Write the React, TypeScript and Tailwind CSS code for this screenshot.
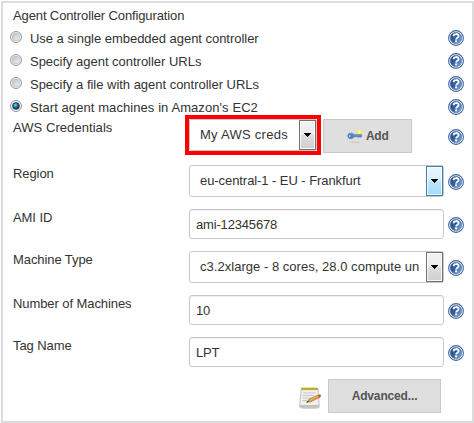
import type { ReactNode } from "react";

function HelpIcon() {
  return (
    <svg width="16" height="16" viewBox="0 0 16 16" className="block shrink-0" aria-label="Help">
      <defs>
        <linearGradient id="helpFill" x1="0" y1="0.2" x2="1" y2="0.8">
          <stop offset="0" stopColor="#1f4a8a" />
          <stop offset="0.45" stopColor="#34619f" />
          <stop offset="1" stopColor="#7fa8d8" />
        </linearGradient>
      </defs>
      <circle cx="8" cy="8" r="7.4" fill="#fff" stroke="#40679f" strokeWidth="1.1" />
      <circle cx="8" cy="8" r="5.8" fill="url(#helpFill)" stroke="#3a639c" strokeWidth="0.4" />
      <path d="M5.6 6.3C5.6 3.3 10.6 3.3 10.6 6.1C10.6 7.8 8.1 7.8 8.1 9.6" fill="none" stroke="#fff" strokeWidth="1.8" />
      <rect x="7.1" y="10.4" width="2" height="1.9" fill="#fff" />
    </svg>
  );
}

function Radio({ checked }: { checked?: boolean }) {
  return (
    <svg width="12" height="12" viewBox="0 0 12 12" className="mt-px block shrink-0">
      <defs>
        <linearGradient id="radioFill" x1="0" y1="0" x2="1" y2="1">
          <stop offset="0" stopColor="#b9bcc2" />
          <stop offset="1" stopColor="#f5f5f5" />
        </linearGradient>
        <radialGradient id="radioDot" cx="0.4" cy="0.35" r="0.65">
          <stop offset="0" stopColor="#8ad8f7" />
          <stop offset="0.45" stopColor="#1b7fb8" />
          <stop offset="1" stopColor="#0c2c4c" />
        </radialGradient>
      </defs>
      <circle cx="6" cy="6" r="5.5" fill="#f6f6f6" stroke="#8a8b8c" strokeWidth="0.9" />
      <circle cx="6" cy="6" r="3.9" fill="url(#radioFill)" stroke="#b5b7bb" strokeWidth="0.6" />
      {checked && <circle cx="6" cy="6" r="3.3" fill="url(#radioDot)" stroke="#17324f" strokeWidth="0.7" />}
    </svg>
  );
}

function KeyIcon() {
  return (
    <svg width="16" height="16" viewBox="0 0 16 16" className="block shrink-0">
      <ellipse cx="8" cy="14.3" rx="6" ry="0.7" fill="#cbcbcb" />
      <path d="M4 5C5.6 5 6.6 5.8 7 6.6H14.6V8.6L13.8 9.4L12.8 8.7L11.8 9.5L10.6 8.8H7C6.6 10.1 5.5 10.8 4 10.8C2 10.8 .7 9.6 .7 7.9C.7 6.2 2 5 4 5Z" fill="#4b83bd" stroke="#3f70a8" strokeWidth="0.4" />
      <path d="M2.6 6.1C4 5.5 5.6 5.9 6.6 7.1H14" fill="none" stroke="#78a4d2" strokeWidth="0.7" />
      <circle cx="2.7" cy="8.1" r="0.8" fill="#dce6ef" />
      <rect x="10.3" y="1.6" width="4.4" height="4.4" fill="#f4ee50" />
      <path d="M12.5 2.2V5.4M10.9 3.8H14.1" stroke="#fffcb0" strokeWidth="0.9" />
    </svg>
  );
}

function NotepadIcon() {
  return (
    <svg width="24" height="24" viewBox="0 0 24 24" className="block shrink-0">
      <ellipse cx="11.5" cy="21.7" rx="10" ry="1" fill="#c4c4c4" />
      <path d="M3.2 3H20.2L21.3 20.6H1.6Z" fill="#f0f0ee" stroke="#b5b5b3" strokeWidth="0.8" />
      <path d="M1.4 18.9H21.4V21.2H1.4Z" fill="#c2c2c0" />
      <path d="M3.4 2H19.8V4H3.4Z" fill="#a39840" />
      <path d="M4 1V4.4M6 1V4.4M8 1V4.4M10 1V4.4M12 1V4.4M14 1V4.4M16 1V4.4M18 1V4.4" stroke="#d3bf3f" strokeWidth="1" />
      <path d="M5 7H17.5M4.8 9.5H16M4.6 12H12M4.4 14.5H9" stroke="#bbbdbf" strokeWidth="0.8" />
      <path d="M9 16.3L11.4 12.9L20.5 9L21.8 11.3L12.9 15.6Z" fill="#dd9c40" stroke="#855c26" strokeWidth="0.6" />
      <path d="M12 13.8L20.8 9.9" stroke="#f6c870" strokeWidth="0.7" />
      <path d="M8 16.8L9.9 14.7L10.8 15.8Z" fill="#3b2b1e" />
      <path d="M20 9.1L21.5 8.4C22.8 8.2 23.5 9.5 22.7 10.4L21.2 11.4Z" fill="#da4830" />
    </svg>
  );
}

function Arrow({ active }: { active?: boolean }) {
  const tone = active
    ? "border-[#3c7fb1] bg-[linear-gradient(#eaf6fd,#d9f0fc_50%,#bee6fd_50%,#a7d9f5)]"
    : "border-[#707070] bg-[linear-gradient(#f2f2f2,#ebebeb_50%,#dddddd_50%,#cfcfcf)]";
  return (
    <span className={`flex w-[17px] shrink-0 items-center justify-center border shadow-[inset_0_0_0_1px_rgba(255,255,255,0.8)] ${tone}`}>
      <svg width="7" height="4" viewBox="0 0 7 4" className="block" shapeRendering="crispEdges">
        <path d="M0 0H7L3.5 4Z" fill="#000" />
      </svg>
    </span>
  );
}

function Select({ text, active, tracking }: { text: string; active?: boolean; tracking: string }) {
  return (
    <div className="flex h-8 w-[255px] rounded-[3px] border border-[#c8c8c8] bg-white">
      <span className={`min-w-0 flex-1 overflow-hidden pl-[10px] leading-[30px] whitespace-nowrap ${tracking}`}>{text}</span>
      <Arrow active={active} />
    </div>
  );
}

function Input({ text }: { text: string }) {
  return (
    <div className="h-[30px] w-[255px] rounded-[3px] border border-[#c8c8c8] bg-white pl-[6px] leading-[29px] tracking-[-0.17px] shadow-[inset_0_1px_1px_rgba(0,0,0,0.07)]">
      {text}
    </div>
  );
}

function Row({ label, tall, children }: { label: string; tall?: boolean; children: ReactNode }) {
  return (
    <div className={`flex ${tall ? "h-11" : "h-[42px]"}`}>
      <div className="w-44 shrink-0 pt-px leading-4 tracking-[-0.08px]">{label}</div>
      {children}
      <div className={`ml-1 ${tall ? "pt-[9px]" : "pt-2"}`}>
        <HelpIcon />
      </div>
    </div>
  );
}

const options = [
  { text: "Use a single embedded agent controller", tracking: "tracking-[-0.03px]" },
  { text: "Specify agent controller URLs", tracking: "tracking-[-0.02px]" },
  { text: "Specify a file with agent controller URLs", tracking: "tracking-[-0.02px]" },
  { text: "Start agent machines in Amazon's EC2", tracking: "tracking-[0.08px]" },
];

export default function App() {
  return (
    <div className="h-[423px] w-[474px] bg-white pt-px pl-px font-['Liberation_Sans',Arial,sans-serif] text-[13px] text-[#333]">
      <div className="h-[422px] w-[473px] border-2 border-[#dcdcdc] pt-[5px] pl-[10px]">
        <div className="h-[22px] leading-4 tracking-[-0.12px]">Agent Controller Configuration</div>
        <div className="-ml-[3px] h-[85px]">
          {options.map((option, i) => (
            <div key={option.text} className="flex h-[23px]">
              <Radio checked={i === 3} />
              <span className={`ml-2 w-[418px] leading-[18px] ${option.tracking}`}>{option.text}</span>
              <HelpIcon />
            </div>
          ))}
        </div>

        <div className="flex h-[50px]">
          <div className="w-[172px] shrink-0 pt-[5px] leading-4 tracking-[0.06px]">AWS Credentials</div>
          <div className="flex h-10 w-[136px] shrink-0 border-4 border-[#f00]">
            <div className="flex w-32 rounded-[2px] border border-[#c8c8c8]">
              <span className="flex-1 pl-[10px] leading-[30px] tracking-[0.27px] whitespace-nowrap">My AWS creds</span>
              <Arrow />
            </div>
          </div>
          <button className="mt-1 ml-[2px] flex h-[34px] w-[89px] items-center border border-[#c8c8c8] bg-[#dfdfdf] pl-[23px] text-[12px] font-bold text-[#555]">
            <KeyIcon />
            <span className="ml-[3px] tracking-[-0.3px]">Add</span>
          </button>
          <div className="ml-9 pt-[14px]">
            <HelpIcon />
          </div>
        </div>

        <Row label="Region" tall><Select text="eu-central-1 - EU - Frankfurt" active tracking="tracking-[-0.07px]" /></Row>
        <Row label="AMI ID"><Input text="ami-12345678" /></Row>
        <Row label="Machine Type" tall><Select text="c3.2xlarge - 8 cores, 28.0 compute un" tracking="tracking-[0.03px]" /></Row>
        <Row label="Number of Machines"><Input text="10" /></Row>
        <Row label="Tag Name"><Input text="LPT" /></Row>

        <div className="flex pl-[285px]">
          <div className="pt-[7px]"><NotepadIcon /></div>
          <button className="ml-[6px] h-[34px] w-[113px] border border-[#c8c8c8] bg-[#dfdfdf] text-[12px] font-bold tracking-[-0.15px] text-[#555]">
            Advanced...
          </button>
        </div>
      </div>
    </div>
  );
}
